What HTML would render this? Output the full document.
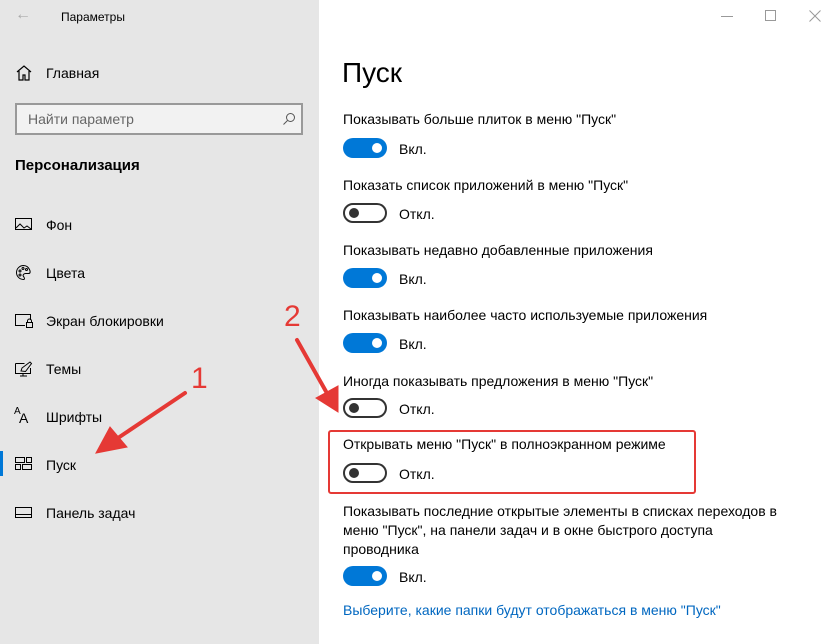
<!DOCTYPE html>
<html><head><meta charset="utf-8"><style>
*{margin:0;padding:0;box-sizing:border-box}
body{width:836px;height:644px;overflow:hidden;font-family:"Liberation Sans",sans-serif;background:#fff;position:relative;color:#000}
.left{position:absolute;left:0;top:0;width:319px;height:644px;background:#e6e6e6}
.a{position:absolute;white-space:nowrap}
.t{font-size:14px}
.nav{font-size:14px;left:46px}
.tg{position:absolute;left:343px;width:44px;height:20px;border-radius:10px}
.on{background:#0078d7}
.on::after{content:"";position:absolute;right:5px;top:5px;width:10px;height:10px;border-radius:50%;background:#fff}
.off{border:2px solid #333;background:#fff}
.off::after{content:"";position:absolute;left:4px;top:3px;width:10px;height:10px;border-radius:50%;background:#333}
.st{left:399px;font-size:14px}
</style></head><body>
<div class="left"></div>
<div class="a" style="left:15px;top:6px;font-size:16px;color:#aaa">←</div>
<div class="a" style="left:61px;top:10px;font-size:12px">Параметры</div>
<div class="a" style="left:721px;top:16px;width:12px;height:1px;background:#999"></div>
<div class="a" style="left:765px;top:10px;width:11px;height:11px;border:1px solid #999"></div>
<svg class="a" style="left:809px;top:10px" width="12" height="12" viewBox="0 0 12 12" stroke="#999" stroke-width="1"><path d="M0.5 0.5l11 11M11.5 0.5l-11 11"/></svg>
<svg class="a" style="left:15px;top:64px" width="18" height="18" viewBox="0 0 18 18" fill="none" stroke="#000" stroke-width="1.2"><path d="M2 8L9 2l7 6M4 7v9h4v-5h2v5h4V7"/></svg>
<div class="a nav" style="top:65px">Главная</div>
<div class="a" style="left:15px;top:103px;width:288px;height:32px;border:2px solid #999;background:#f2f2f2"></div>
<div class="a" style="left:28px;top:111px;font-size:14px;color:#666">Найти параметр</div>
<svg class="a" style="left:282px;top:112px" width="14" height="14" viewBox="0 0 14 14" fill="none" stroke="#555"><circle cx="8.5" cy="5.5" r="4"/><path d="M5.5 8.5L1.5 12.5"/></svg>
<div class="a" style="left:15px;top:157px;font-size:15px;font-weight:bold">Персонализация</div>
<svg class="a" style="left:15px;top:217px" width="17" height="14" viewBox="0 0 17 14" fill="none" stroke="#000"><rect x="0.5" y="1.5" width="16" height="11"/><path d="M1 11l4-4 4 4 3-2 4 3"/></svg>
<div class="a nav" style="top:217px">Фон</div>
<svg class="a" style="left:15px;top:264px" width="17" height="17" viewBox="0 0 17 17" fill="none" stroke="#000"><path d="M8.5 1.5a7 7 0 1 0 0 14c1.5 0 1-2 0-3s0-3 2-3h3c2 0 2-2 1-4a7 7 0 0 0-6-4z"/><circle cx="5" cy="7" r="1"/><circle cx="8" cy="4.5" r="1"/><circle cx="11.5" cy="5.5" r="1"/><circle cx="5" cy="11" r="1"/></svg>
<div class="a nav" style="top:265px">Цвета</div>
<svg class="a" style="left:15px;top:313px" width="18" height="15" viewBox="0 0 18 15" fill="none" stroke="#000"><path d="M10 12.5H0.5v-11h15V7"/><rect x="11.5" y="9.5" width="6" height="5"/><path d="M12.5 9.5V8a2 2 0 0 1 4 0v1.5"/></svg>
<div class="a nav" style="top:313px">Экран блокировки</div>
<svg class="a" style="left:15px;top:361px" width="18" height="16" viewBox="0 0 18 16" fill="none" stroke="#000"><path d="M0.5 2.5h9M0.5 2.5v10h15V7M5 15h7M8 12.5V15"/><path d="M6 10l1-3 8-6 1.5 1.5-6 8z"/></svg>
<div class="a nav" style="top:361px">Темы</div>
<div class="a" style="left:14px;top:406px;font-size:10px">A</div><div class="a" style="left:19px;top:410px;font-size:14px">A</div>
<div class="a nav" style="top:409px">Шрифты</div>
<div class="a" style="left:0;top:451px;width:3px;height:25px;background:#0078d7"></div>
<svg class="a" style="left:15px;top:457px" width="17" height="13" viewBox="0 0 17 13" fill="none" stroke="#000"><rect x="0.5" y="0.5" width="9" height="5"/><rect x="11.5" y="0.5" width="5" height="5"/><rect x="0.5" y="7.5" width="5" height="5"/><rect x="7.5" y="7.5" width="9" height="5"/></svg>
<div class="a nav" style="top:457px">Пуск</div>
<svg class="a" style="left:15px;top:507px" width="17" height="11" viewBox="0 0 17 11" fill="none" stroke="#000"><rect x="0.5" y="0.5" width="16" height="10"/><path d="M0.5 7.5h16"/></svg>
<div class="a nav" style="top:505px">Панель задач</div>

<div class="a" style="left:342px;top:57px;font-size:28px">Пуск</div>
<div class="a t" style="left:343px;top:111px">Показывать больше плиток в меню "Пуск"</div>
<div class="tg on" style="top:138px"></div><div class="a st" style="top:141px">Вкл.</div>
<div class="a t" style="left:343px;top:177px">Показать список приложений в меню "Пуск"</div>
<div class="tg off" style="top:203px"></div><div class="a st" style="top:206px">Откл.</div>
<div class="a t" style="left:343px;top:242px">Показывать недавно добавленные приложения</div>
<div class="tg on" style="top:268px"></div><div class="a st" style="top:271px">Вкл.</div>
<div class="a t" style="left:343px;top:307px">Показывать наиболее часто используемые приложения</div>
<div class="tg on" style="top:333px"></div><div class="a st" style="top:336px">Вкл.</div>
<div class="a t" style="left:343px;top:373px">Иногда показывать предложения в меню "Пуск"</div>
<div class="tg off" style="top:398px"></div><div class="a st" style="top:401px">Откл.</div>
<div class="a" style="left:328px;top:430px;width:368px;height:64px;border:2px solid #e53935;border-radius:3px"></div>
<div class="a t" style="left:343px;top:436px">Открывать меню "Пуск" в полноэкранном режиме</div>
<div class="tg off" style="top:463px"></div><div class="a st" style="top:466px">Откл.</div>
<div class="a t" style="left:343px;top:502px;line-height:19px;white-space:normal;width:440px">Показывать последние открытые элементы в списках переходов в меню "Пуск", на панели задач и в окне быстрого доступа проводника</div>
<div class="tg on" style="top:566px"></div><div class="a st" style="top:569px">Вкл.</div>
<div class="a t" style="left:343px;top:602px;color:#0067c0">Выберите, какие папки будут отображаться в меню "Пуск"</div>

<div class="a" style="left:191px;top:362px;font-size:30px;color:#e53935">1</div>
<div class="a" style="left:284px;top:300px;font-size:30px;color:#e53935">2</div>
<svg class="a" style="left:0;top:0" width="836" height="644"><g stroke="#e53935" stroke-width="4" fill="#e53935" stroke-linecap="round"><path d="M185 393L115 440"/><path d="M96 453l14-26 17 20z" stroke-width="1"/><path d="M297 340L328 395"/><path d="M338 412l-22-14 22-12z" stroke-width="1"/></g></svg>
</body></html>
